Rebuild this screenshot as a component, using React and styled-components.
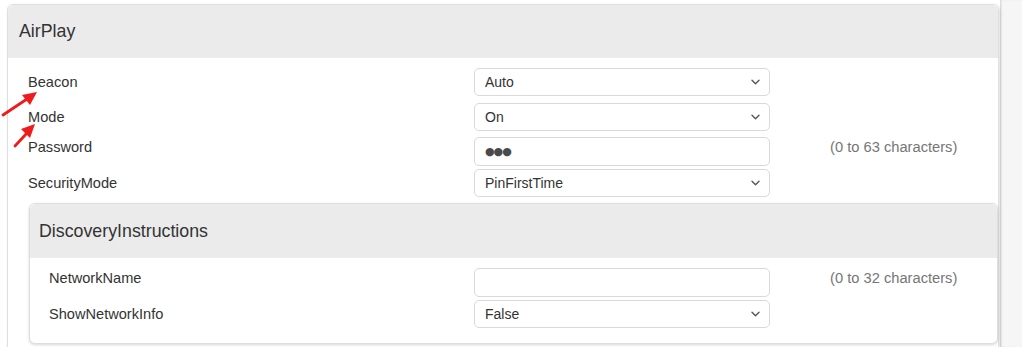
import { styled, createGlobalStyle } from "styled-components"

const GlobalStyle = createGlobalStyle`
  html, body { margin: 0; padding: 0; background: #fff; }
  body { font-family: "Liberation Sans", Arial, Helvetica, sans-serif; color: #333; }
`

function Chevron() {
  return (
    <svg width="9" height="6" viewBox="0 0 9 6" fill="none">
      <path d="M1 1.2l3.5 3.5 3.5-3.5" stroke="#555" strokeWidth="1.4" strokeLinecap="round" strokeLinejoin="round" />
    </svg>
  )
}

function SelectBox({ value }) {
  return (
    <SelectWrap>
      <Select defaultValue={value}>
        <option>{value}</option>
      </Select>
      <ChevronSlot><Chevron /></ChevronSlot>
    </SelectWrap>
  )
}

function Field({ label, labelWidth, kind, value, hint, mt }) {
  const isInput = kind === "input"
  return (
    <Row $labelWidth={labelWidth} $mt={mt}>
      <Label $top={isInput ? 0 : 4}>{label}</Label>
      {isInput ? <TextInput readOnly value={value} $dots={value.length > 0} /> : <SelectBox value={value} />}
      {hint && <Hint $top={isInput ? 0 : 4}>{hint}</Hint>}
    </Row>
  )
}

function Arrows() {
  return (
    <ArrowLayer width="60" height="160" viewBox="0 0 60 160">
      <line x1="3" y1="115" x2="27" y2="99" stroke="#ee1c1c" strokeWidth="2.8" strokeLinecap="round" />
      <polygon points="37,92 22,95 30,105" fill="#ee1c1c" />
      <line x1="15" y1="146" x2="27" y2="133" stroke="#ee1c1c" strokeWidth="2.8" strokeLinecap="round" />
      <polygon points="35,124 21,129 30,138" fill="#ee1c1c" />
    </ArrowLayer>
  )
}

export default function App() {
  return (
    <Page>
      <GlobalStyle />
      <Main>
        <Card>
          <CardHeader $pad={11} $h={53}>AirPlay</CardHeader>
          <CardBody $pad={20} $top={10} $bottom={40}>
            <Field label="Beacon" labelWidth={446} kind="select" value="Auto" mt={0} />
            <Field label="Mode" labelWidth={446} kind="select" value="On" mt={7} />
            <Field label="Password" labelWidth={446} kind="input" value="●●●" hint="(0 to 63 characters)" mt={6} />
            <Field label="SecurityMode" labelWidth={446} kind="select" value="PinFirstTime" mt={3} />
            <SubCard>
              <CardHeader $pad={9} $h={54}>DiscoveryInstructions</CardHeader>
              <CardBody $pad={19} $top={10} $bottom={15}>
                <Field label="NetworkName" labelWidth={425} kind="input" value="" hint="(0 to 32 characters)" mt={0} />
                <Field label="ShowNetworkInfo" labelWidth={425} kind="select" value="False" mt={3} />
              </CardBody>
            </SubCard>
          </CardBody>
        </Card>
        <Arrows />
      </Main>
      <Aside />
    </Page>
  )
}

const Page = styled.div`
  display: flex;
  width: 1022px;
  height: 347px;
  overflow: hidden;
`

const Main = styled.main`
  position: relative;
  width: 1000px;
  flex: none;
  padding: 4px 0 0 7px;
  box-sizing: border-box;
`

const Aside = styled.aside`
  flex: 1;
  background: #f6f6f6;
  border-left: 1px solid #dcdcdc;
  box-shadow: inset 1px 0 2px rgba(0, 0, 0, 0.06);
`

const Card = styled.section`
  width: 992px;
  border: 1px solid #e0e0e0;
  border-radius: 6px 6px 0 0;
  box-shadow: 1px 1px 3px rgba(0, 0, 0, 0.14);
  background: #fff;
  box-sizing: border-box;
`

const SubCard = styled.section`
  margin: 6px 0 0 1px;
  border: 1px solid #dedede;
  border-radius: 6px;
  box-shadow: 0 1px 3px rgba(0, 0, 0, 0.16);
  background: #fff;
  overflow: hidden;
`

const CardHeader = styled.header`
  display: flex;
  align-items: center;
  height: ${p => p.$h}px;
  padding: 0 ${p => p.$pad}px;
  background: #ebebeb;
  border-radius: 6px 6px 0 0;
  font-size: 17.8px;
  color: #333;
`

const CardBody = styled.div`
  display: flex;
  flex-direction: column;
  padding: ${p => p.$top}px 0 ${p => p.$bottom}px ${p => p.$pad}px;
`

const Row = styled.div`
  display: grid;
  grid-template-columns: ${p => p.$labelWidth}px 296px auto;
  align-items: start;
  margin-top: ${p => p.$mt}px;
`

const Label = styled.label`
  font-size: 14.6px;
  line-height: 20px;
  padding-top: ${p => p.$top}px;
  color: #333;
  white-space: nowrap;
`

const Hint = styled.span`
  margin-left: 60px;
  font-size: 14.7px;
  line-height: 20px;
  padding-top: ${p => p.$top}px;
  color: #767676;
  white-space: nowrap;
`

const SelectWrap = styled.div`
  position: relative;
  height: 28px;
`

const Select = styled.select`
  appearance: none;
  width: 100%;
  height: 28px;
  margin: 0;
  padding: 0 30px 0 10px;
  border: 1px solid #d9d9d9;
  border-radius: 5px;
  background: #fff;
  font-family: "Liberation Sans", Arial, sans-serif;
  font-size: 14px;
  color: #333;
  box-sizing: border-box;
`

const ChevronSlot = styled.span`
  position: absolute;
  right: 10px;
  top: 11px;
  display: flex;
  pointer-events: none;
`

const TextInput = styled.input`
  width: 100%;
  height: 29px;
  margin: 0;
  padding: 0 10px;
  border: 1px solid #d9d9d9;
  border-radius: 5px;
  background: #fff;
  font-family: "DejaVu Sans", "Liberation Sans", sans-serif;
  font-size: ${p => (p.$dots ? "11px" : "14px")};
  letter-spacing: -1px;
  color: #4a4a4a;
  box-sizing: border-box;
  outline: none;
`

const ArrowLayer = styled.svg`
  position: absolute;
  left: 0;
  top: 0;
  pointer-events: none;
`
